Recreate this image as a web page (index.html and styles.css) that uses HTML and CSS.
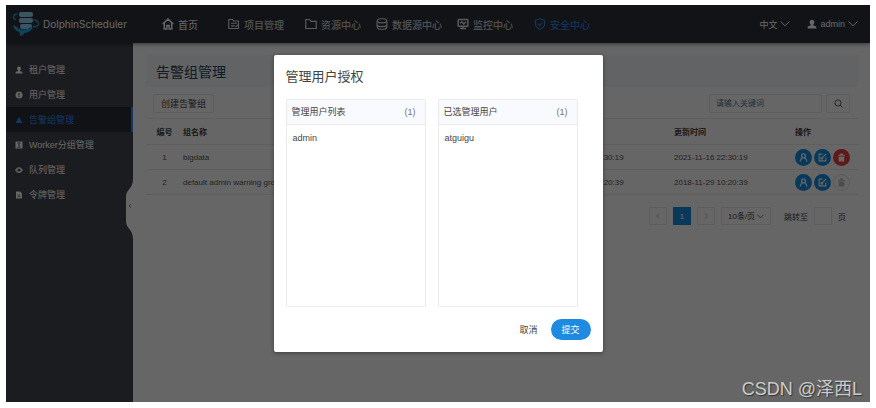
FILE: index.html
```
<!DOCTYPE html>
<html lang="zh-CN">
<head>
    <meta charset="UTF-8">
    <meta name="viewport" content="width=device-width, initial-scale=1.0">
    <title>DolphinScheduler</title>
    <link rel="stylesheet" href="styles.css">
</head>
<body>
    <svg class="sprite" aria-hidden="true">
        <symbol id="i-user" viewBox="0 0 16 16"><path d="M8 1c2.300 0 3.700 1.700 3.700 4 0 1.800-.8 3.200-1.900 4v1l4.200 1.700c.8.400 1 1 1 3.300H1c0-2.300.2-2.900 1-3.300L6.200 10V9C5.100 8.200 4.300 6.800 4.300 5 4.300 2.700 5.700 1 8 1z" fill="currentColor"/></symbol>
        <symbol id="i-down" viewBox="0 0 16 16"><path d="M1 4l7 7 7-7" fill="none" stroke="currentColor" stroke-width="1.600"/></symbol>
        <symbol id="i-person" viewBox="0 0 16 16"><g fill="none" stroke="currentColor" stroke-width="2.200"><circle cx="8" cy="5" r="3.500"/><path d="M2 15c0-3.500 2-5 4-6.500M14 15c0-3.500-2-5-4-6.500"/></g></symbol>
        <symbol id="i-edit" viewBox="0 0 16 16"><g fill="none" stroke="currentColor" stroke-width="2"><path d="M8 2H2v12h12V8"/><path d="M6 10l8.500-8.500M5.500 7v3.500H9"/></g></symbol>
        <symbol id="i-trash" viewBox="0 0 16 16"><path d="M5.500 1h5v2H14v2H2V3h3.500zM3 6h10v9H3z" fill="currentColor"/></symbol>
    </svg>

    <div class="app">
        <header class="topbar">
            <a class="logo" href="#">
                <svg viewBox="0 0 28 26" width="28" height="26">
                    <g fill="#8fd3f4"><rect x="7" y="1" width="14" height="5" rx="2"/><rect x="7" y="7" width="14" height="5" rx="2"/><rect x="8" y="13" width="12" height="5" rx="2"/></g>
                    <g fill="none" stroke="#1fa8dd" stroke-width="1.300"><path d="M5 3C1 3 0 8 4 8.500M22 9c5 0 6 6 2 6.500h-3"/></g>
                    <path d="M1 14c3 1 4 2 6 4 3 1 8 1 11-2l3 1c-2 3-6 5-9 5 0 2-2 3-4 3 0-2 0-3-1-4-3-1-5-3-6-7z" fill="#1fa8dd"/>
                </svg>
                <span>DolphinScheduler</span>
            </a>
            <nav class="nav">
                <a class="home" href="#">
                    <svg viewBox="0 0 16 16"><path d="M1 8l7-6.500L15 8M3 7v7.500h3.500V10h3v4.500H13V7" fill="none" stroke="currentColor" stroke-width="2"/></svg>
                    首页
                </a>
                <a href="#">
                    <svg viewBox="0 0 16 16"><path d="M1 14V2h5l1.500 2H14v10zM4 7h8M4 10.500h5M10 12l4-3" fill="none" stroke="currentColor" stroke-width="1.500"/></svg>
                    项目管理
                </a>
                <a href="#">
                    <svg viewBox="0 0 16 16"><path d="M1 14V2h5l2 2.500h7V14z" fill="none" stroke="currentColor" stroke-width="1.600"/></svg>
                    资源中心
                </a>
                <a href="#">
                    <svg viewBox="0 0 16 16"><g fill="none" stroke="currentColor" stroke-width="1.600"><rect x="1.500" y="1" width="13" height="14" rx="4"/><path d="M1.500 5c3 2 10 2 13 0M1.500 10c3 2 10 2 13 0"/></g></svg>
                    数据源中心
                </a>
                <a href="#">
                    <svg viewBox="0 0 16 16"><g fill="none" stroke="currentColor" stroke-width="2"><rect x="1.500" y="2" width="13" height="9" rx="1"/><path d="M4 7l2.500-2 2.500 3 3-3M4 14h8M8 11v3"/></g></svg>
                    监控中心
                </a>
                <a class="active" href="#">
                    <svg viewBox="0 0 16 16"><path d="M8 1l6 2v5c0 3.500-2.500 5.500-6 7-3.500-1.500-6-3.500-6-7V3zM5 7.500l2.500 2.500L11.500 6" fill="none" stroke="currentColor" stroke-width="1.400"/></svg>
                    安全中心
                </a>
            </nav>
            <div class="account">
                <button type="button">中文 <svg><use href="#i-down"/></svg></button>
                <button type="button"><svg><use href="#i-user"/></svg> admin <svg><use href="#i-down"/></svg></button>
            </div>
        </header>

        <div class="body">
            <aside class="sidebar">
                <a href="#"><svg><use href="#i-user"/></svg>租户管理</a>
                <a href="#">
                    <svg viewBox="0 0 16 16"><circle cx="8" cy="8" r="7" fill="currentColor"/><path d="M8 4v5M8 10.500v2" stroke="#444852" stroke-width="2.500"/></svg>用户管理
                </a>
                <a class="active" href="#">
                    <svg viewBox="0 0 16 16"><path d="M8 2l7 12H1z" fill="currentColor"/></svg>告警组管理
                </a>
                <a href="#">
                    <svg viewBox="0 0 16 16"><rect x="1" y="1" width="14" height="14" rx="1" fill="currentColor"/><path d="M5 4h6M8 5v5M5 12h6" stroke="#444852" stroke-width="2"/></svg>Worker分组管理
                </a>
                <a href="#">
                    <svg viewBox="0 0 16 16"><g fill="none" stroke="currentColor" stroke-width="2.500"><circle cx="8" cy="8" r="4.500"/><path d="M0 8h3M13 8h3"/></g></svg>队列管理
                </a>
                <a href="#">
                    <svg viewBox="0 0 16 16"><path d="M2 1h8l4 4v10H2z" fill="currentColor"/><path d="M5 8h6M5 11.500h6" stroke="#444852" stroke-width="1.500"/></svg>令牌管理
                </a>
                <button class="toggle" type="button" aria-label="收起菜单">
                    <svg viewBox="0 0 7 60"><path d="M7 0C7 10 0 10 0 18v24c0 8 7 8 7 18z" fill="#fff"/><path d="M5 25l-2 2 2 2" fill="none" stroke="#7d8bb5"/></svg>
                </button>
            </aside>

            <main class="main">
                <h1>告警组管理</h1>
                <div class="tools">
                    <button class="create" type="button">创建告警组</button>
                    <form class="search">
                        <input type="text" placeholder="请输入关键词" aria-label="请输入关键词">
                        <button type="button" aria-label="搜索">
                            <svg viewBox="0 0 16 16"><g fill="none" stroke="currentColor" stroke-width="1.500"><circle cx="7" cy="7" r="5.500"/><path d="M11 11l4 4"/></g></svg>
                        </button>
                    </form>
                </div>
                <table>
                    <colgroup>
                        <col class="col-id">
                        <col>
                        <col class="col-created">
                        <col class="col-updated">
                        <col class="col-ops">
                    </colgroup>
                    <thead>
                        <tr><th>编号</th><th>组名称</th><th>创建时间</th><th>更新时间</th><th>操作</th></tr>
                    </thead>
                    <tbody>
                        <tr>
                            <td>1</td>
                            <td>bigdata</td>
                            <td>2021-11-16 22:30:19</td>
                            <td>2021-11-16 22:30:19</td>
                            <td>
                                <div class="ops">
                                    <button type="button" aria-label="管理用户"><svg><use href="#i-person"/></svg></button>
                                    <button type="button" aria-label="编辑"><svg><use href="#i-edit"/></svg></button>
                                    <button class="delete" type="button" aria-label="删除"><svg><use href="#i-trash"/></svg></button>
                                </div>
                            </td>
                        </tr>
                        <tr>
                            <td>2</td>
                            <td>default admin warning group</td>
                            <td>2018-11-29 10:20:39</td>
                            <td>2018-11-29 10:20:39</td>
                            <td>
                                <div class="ops">
                                    <button type="button" aria-label="管理用户"><svg><use href="#i-person"/></svg></button>
                                    <button type="button" aria-label="编辑"><svg><use href="#i-edit"/></svg></button>
                                    <button class="delete" type="button" aria-label="删除" disabled><svg><use href="#i-trash"/></svg></button>
                                </div>
                            </td>
                        </tr>
                    </tbody>
                </table>
                <div class="pager">
                    <button type="button" aria-label="上一页"><svg viewBox="0 0 16 16"><path d="M10 3L5 8l5 5" fill="none" stroke="currentColor" stroke-width="1.500"/></svg></button>
                    <button class="current" type="button">1</button>
                    <button type="button" aria-label="下一页"><svg viewBox="0 0 16 16"><path d="M6 3l5 5-5 5" fill="none" stroke="currentColor" stroke-width="1.500"/></svg></button>
                    <span class="size">
                        <select aria-label="每页条数"><option>10条/页</option></select>
                        <svg><use href="#i-down"/></svg>
                    </span>
                    <label for="jump">跳转至</label>
                    <input type="text" id="jump">
                    <span>页</span>
                </div>
            </main>
        </div>

        <div class="mask">
            <section class="dialog" role="dialog" aria-labelledby="dialog-title">
                <h2 id="dialog-title">管理用户授权</h2>
                <div class="lists">
                    <div class="list">
                        <h3>管理用户列表 <span>(1)</span></h3>
                        <ul><li>admin</li></ul>
                    </div>
                    <div class="list">
                        <h3>已选管理用户 <span>(1)</span></h3>
                        <ul><li>atguigu</li></ul>
                    </div>
                </div>
                <div class="actions">
                    <button class="cancel" type="button">取消</button>
                    <button class="submit" type="button">提交</button>
                </div>
            </section>
        </div>
        <div class="watermark">CSDN @泽西L</div>
    </div>
</body>
</html>
```

FILE: styles.css
```
* {
    box-sizing: border-box;
}
body {
    margin: 0;
    padding: 5px 6px 6px;
    background: #fff;
    color: #444;
    font-family: "Liberation Sans", "Noto Sans CJK SC", sans-serif;
    font-size: 8px;
}
h1, h2, h3, ul {
    margin: 0;
    padding: 0;
    font-weight: normal;
    list-style: none;
}
a {
    color: inherit;
    text-decoration: none;
}
button, input, select {
    margin: 0;
    padding: 0;
    border: none;
    background: none;
    color: inherit;
    font: inherit;
}
svg {
    flex: none;
}
.sprite {
    display: none;
}
.app {
    position: relative;
    display: flex;
    flex-direction: column;
    min-height: calc(100vh - 11px);
    overflow: hidden;
    background: #fff;
}

/* top bar */
.topbar {
    display: flex;
    align-items: center;
    height: 38px;
    padding: 0 12px 0 6px;
    background: #2d303a;
    color: #fff;
    font-size: 10px;
    box-shadow: 0 1px 4px rgba(0, 0, 0, 0.5);
    z-index: 1;
}
.logo {
    display: flex;
    align-items: center;
    gap: 3px;
    width: 150px;
    font-family: Inter, sans-serif;
}
.nav {
    display: grid;
    grid-template-columns: 66px 77px 71px 81px 77px auto;
}
.nav a {
    display: flex;
    align-items: center;
    gap: 4px;
    color: #e0e0e0;
    white-space: nowrap;
}
.nav .home {
    color: #fff;
}
.nav .active {
    color: #2d8cf0;
}
.nav svg {
    width: 12px;
    height: 12px;
}
.account {
    display: flex;
    gap: 17px;
    margin-left: auto;
    font-size: 9px;
}
.account button {
    display: flex;
    align-items: center;
    gap: 3px;
}
.account svg {
    width: 10px;
    height: 10px;
}

/* side menu */
.body {
    display: flex;
    flex: 1;
}
.sidebar {
    position: relative;
    flex: none;
    width: 127px;
    padding-top: 14px;
    background: #444852;
    color: #fff;
    font-size: 9px;
}
.sidebar a {
    display: flex;
    align-items: center;
    gap: 6px;
    height: 25px;
    padding-left: 9px;
}
.sidebar a.active {
    background: #2b2e38;
    border-right: 2px solid #2d8cf0;
    color: #2d8cf0;
}
.sidebar a svg {
    width: 8px;
    height: 8px;
}
.toggle {
    position: absolute;
    top: 136px;
    right: 0;
    width: 7px;
    height: 60px;
}
.toggle svg {
    display: block;
}

/* content */
.main {
    flex: 1;
    min-width: 0;
    padding: 12px 12px 12px 13px;
}
.main h1 {
    height: 32px;
    padding-left: 10px;
    background: #f3f7fc;
    color: #2a455b;
    font-size: 14px;
    line-height: 34px;
}
.tools {
    display: flex;
    justify-content: space-between;
    padding: 7px 8px 5px 7px;
}
.create, .search input, .search button {
    height: 19px;
    border: 1px solid #e6e8ec;
    border-radius: 2px;
}
.create {
    padding: 0 7px;
    font-size: 9px;
}
.search {
    display: flex;
    gap: 4px;
}
.search input {
    width: 113px;
    padding: 0 6px;
}
.search input::placeholder {
    color: #5c708c;
}
.search button {
    width: 24px;
}
.search svg {
    display: block;
    width: 9px;
    height: 9px;
    margin: 0 auto;
}
table {
    width: 100%;
    border-collapse: collapse;
    table-layout: fixed;
    border-top: 1px solid #ecedf0;
}
.col-id {
    width: 37px;
}
.col-created {
    width: 124px;
}
.col-updated {
    width: 121px;
}
.col-ops {
    width: 63px;
}
th, td {
    height: 25px;
    padding: 0;
    border-bottom: 1px solid #ecedf0;
    text-align: left;
    white-space: nowrap;
}
thead th {
    height: 26px;
}
td {
    color: #555;
}
th:first-child, td:first-child {
    text-align: center;
}
.ops {
    display: flex;
    gap: 2px;
}
.ops button {
    display: flex;
    align-items: center;
    justify-content: center;
    width: 17px;
    height: 17px;
    border-radius: 50%;
    background: #1890e0;
    color: #fff;
}
.ops .delete {
    background: #ed3f3f;
}
.ops .delete:disabled {
    border: 1px solid #e0e0e0;
    background: #fff;
    color: #bbb;
}
.ops svg {
    width: 9px;
    height: 9px;
}
.pager {
    display: flex;
    align-items: center;
    justify-content: flex-end;
    gap: 6px;
    padding: 12px 12px 0 0;
}
.pager button, .pager input, .size {
    width: 18px;
    height: 18px;
    border: 1px solid #e6e8ec;
}
.pager button {
    color: #999;
}
.pager .current {
    border-color: #1890e0;
    background: #1890e0;
    color: #fff;
}
.pager button svg {
    display: block;
    width: 8px;
    height: 8px;
    margin: 0 auto;
}
.pager label {
    margin-left: 7px;
}
.size {
    display: flex;
    align-items: center;
    width: 50px;
    padding: 0 6px;
}
.size select {
    flex: 1;
    min-width: 0;
    appearance: none;
}
.size svg {
    width: 7px;
    height: 7px;
}

/* user dialog */
.mask {
    position: absolute;
    inset: 0;
    z-index: 2;
    display: flex;
    align-items: flex-start;
    justify-content: center;
    padding-top: 50px;
    background: rgba(0, 0, 0, 0.6);
}
.dialog {
    width: 329px;
    padding: 12px;
    border-radius: 2px;
    background: #fff;
    box-shadow: 0 1px 4px rgba(0, 0, 0, 0.4);
    font-size: 9px;
}
.dialog h2 {
    margin-bottom: 12px;
    font-size: 13px;
    line-height: 20px;
}
.lists {
    display: flex;
    gap: 12px;
}
.list {
    width: 140px;
    height: 208px;
    border: 1px solid #e8eaec;
    border-radius: 2px;
}
.list h3 {
    display: flex;
    justify-content: space-between;
    padding: 0 9px 0 5px;
    border-bottom: 1px solid #e8eaec;
    background: #f8fafd;
    font-size: 9px;
    line-height: 24px;
}
.list h3 span {
    color: #777;
}
.list li {
    padding: 4px 6px;
    line-height: 18px;
}
.actions {
    display: flex;
    justify-content: flex-end;
    gap: 13px;
    padding-top: 12px;
}
.submit {
    width: 40px;
    height: 21px;
    border-radius: 11px;
    background: #1e8ae0;
    color: #fff;
}
.watermark {
    position: absolute;
    right: 8px;
    bottom: 0;
    z-index: 3;
    color: #ccc;
    font-size: 18px;
    line-height: 26px;
    text-shadow: 1px 1px 1px #333;
}
```
